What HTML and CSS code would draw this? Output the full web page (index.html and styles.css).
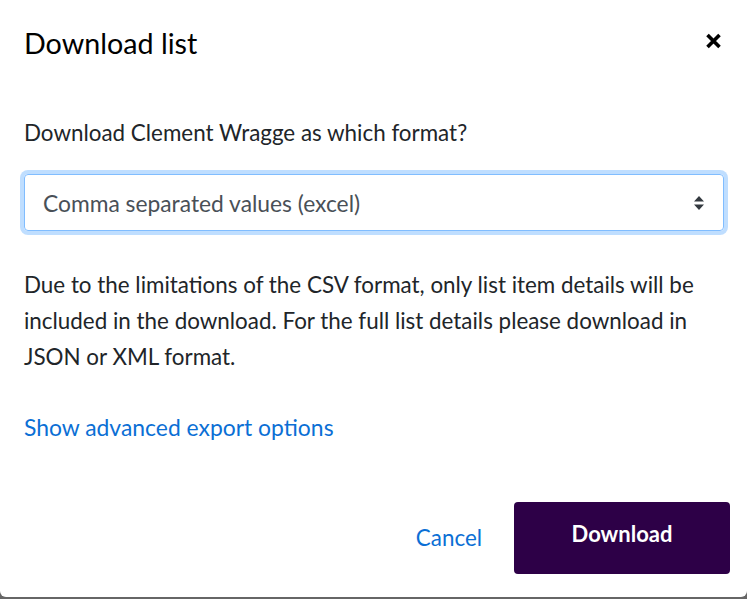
FILE: index.html
```html
<!DOCTYPE html>
<html lang="en">
<head>
<meta charset="utf-8">
<title>Download list</title>
<link rel="stylesheet" href="styles.css">
</head>
<body>
<div class="dialog">
  <div class="header">
    <h2 class="title">Download list</h2>
    <button class="close" aria-label="Close">
      <svg width="17" height="16" viewBox="0 0 17 16"><path d="M2.5 2 L14.5 14 M14.5 2 L2.5 14" stroke="#000" stroke-width="3.6" stroke-linecap="butt" fill="none"/></svg>
    </button>
  </div>
  <div class="body">
    <label class="label">Download Clement Wragge as which format?</label>
    <div class="select">
      <span class="select-text">Comma separated values (excel)</span>
      <svg class="arrows" width="10" height="14" viewBox="0 0 10 14"><path d="M5 0 L10 5.5 L0 5.5 Z M0 8.5 L10 8.5 L5 14 Z" fill="#343a40"/></svg>
    </div>
    <p class="note">Due to the limitations of the CSV format, only list item details will be included in the download. For the full list details please download in JSON or XML format.</p>
    <a class="link" href="#">Show advanced export options</a>
  </div>
  <div class="footer">
    <a class="cancel" href="#">Cancel</a>
    <button class="primary">Download</button>
  </div>
</div>
</body>
</html>
```
FILE: styles.css
```css
html, body {
  margin: 0;
  padding: 0;
  height: 100%;
}
body {
  background: #666;
  font-family: Lato, "Open Sans", sans-serif;
  color: #212529;
  overflow: hidden;
}
.dialog {
  background: #fff;
  height: 597px;
  border-radius: 0 0 6px 6px;
  display: flex;
  flex-direction: column;
}
.header {
  display: flex;
  align-items: center;
  justify-content: space-between;
  padding: 24px 25px 0 24px;
  height: 38px;
}
.title {
  margin: 0;
  font-size: 28.7px;
  font-weight: 400;
  line-height: 38px;
  color: #000;
}
.close {
  border: 0;
  background: none;
  padding: 0;
  width: 17px;
  height: 16px;
  display: flex;
  margin-top: -5px;
}
.body {
  display: flex;
  flex-direction: column;
  align-items: flex-start;
  padding: 53px 23px 0 24px;
}
.label {
  font-size: 22.4px;
  line-height: 36px;
}
.select {
  margin-top: 23px;
  align-self: stretch;
  height: 55px;
  border: 1px solid #80bdff;
  border-radius: 4px;
  box-shadow: 0 0 0 4px rgba(0, 123, 255, 0.25);
  display: flex;
  align-items: center;
  justify-content: space-between;
  padding: 0 19px 0 18px;
}
.select-text {
  font-size: 22.8px;
  color: #495057;
}
.arrows {
  display: block;
}
.note {
  margin: 36px 0 0;
  font-size: 22.4px;
  line-height: 36px;
}
.link {
  margin-top: 34px;
  font-size: 22.9px;
  line-height: 36px;
  color: #0b6fd5;
  text-decoration: none;
}
.footer {
  display: flex;
  align-items: center;
  justify-content: flex-end;
  gap: 32px;
  padding: 57px 17px 0 24px;
}
.cancel {
  font-size: 22.4px;
  color: #0b6fd5;
  text-decoration: none;
  line-height: 36px;
}
.primary {
  width: 216px;
  height: 72px;
  border: 0;
  border-radius: 4px;
  background: #2d0047;
  color: #fff;
  font-family: Lato, sans-serif;
  font-size: 22px;
  font-weight: 700;
  padding: 0 0 10px;
}
```
